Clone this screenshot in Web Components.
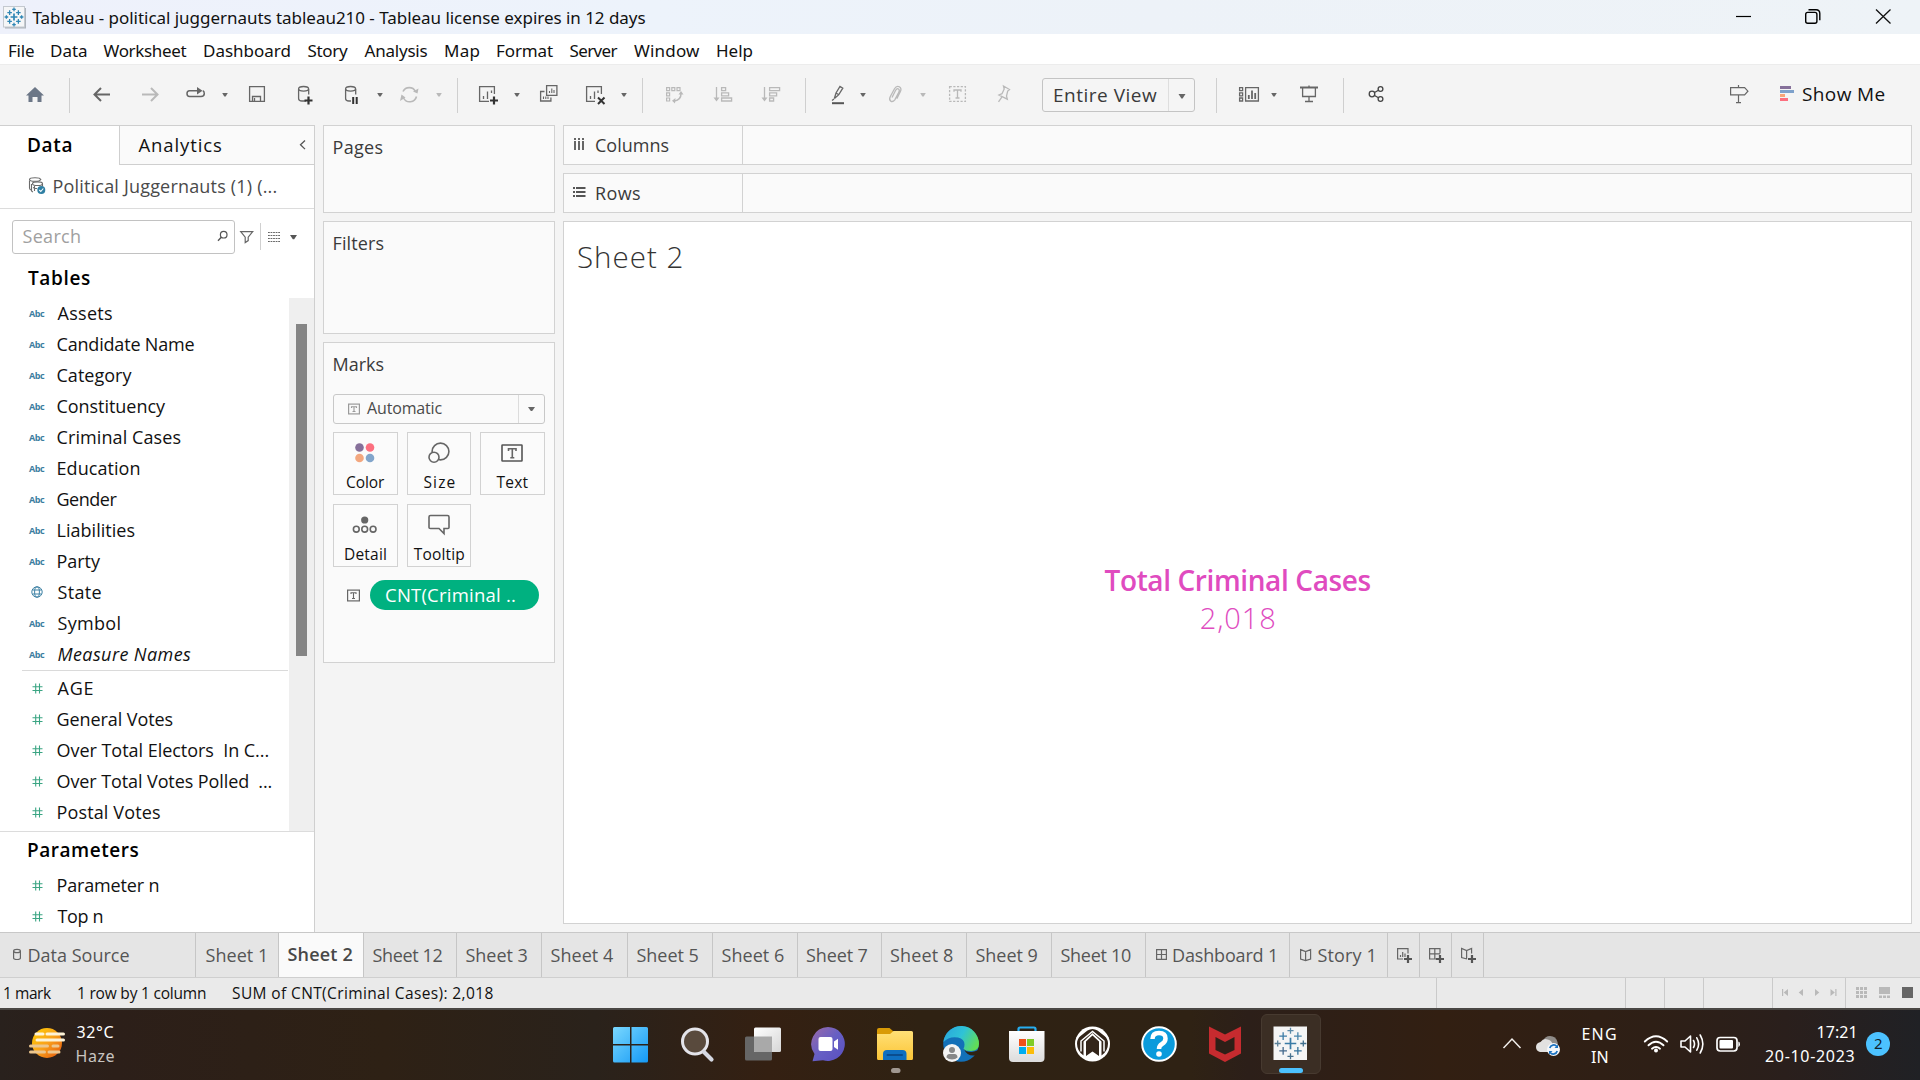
<!DOCTYPE html>
<html lang="en">
<head>
<meta charset="utf-8">
<title>Tableau - political juggernauts tableau210</title>
<style>
html,body{margin:0;padding:0}
body{width:1920px;height:1080px;overflow:hidden;background:#f4f4f4;font-family:"Open Sans","Liberation Sans",sans-serif;font-size:18px;color:#111}
</style>
</head>
<body>
<tableau-desktop></tableau-desktop>
<script>
const ctx = document.createElement('canvas').getContext('2d');

// Text run set to an exact ink width (w) and baseline (b, from the container's top).
customElements.define('t-x', class extends HTMLElement {
  connectedCallback() {
    if (!this.shadowRoot) {
      this.attachShadow({mode: 'open'}).innerHTML =
        '<style>:host{display:block;flex:none;height:24px;line-height:24px;white-space:pre}</style><slot></slot>';
    }
    const cs = getComputedStyle(this), txt = this.textContent;
    ctx.font = `${cs.fontStyle} ${cs.fontWeight} ${cs.fontSize} ${cs.fontFamily}`;
    const m = ctx.measureText(txt);
    const ink = m.actualBoundingBoxLeft + m.actualBoundingBoxRight;
    const w = +this.getAttribute('w') || ink;
    this.style.width = w + 'px';
    if (txt.length > 1) this.style.letterSpacing = ((w - ink) / (txt.length - 1)).toFixed(3) + 'px';
    this.style.textIndent = m.actualBoundingBoxLeft.toFixed(2) + 'px';
    if (this.hasAttribute('b')) {
      const A = Math.round(m.fontBoundingBoxAscent), D = Math.round(m.fontBoundingBoxDescent);
      this.style.marginTop = Math.round(+this.getAttribute('b') - ((24 - A - D) / 2 + A)) + 'px';
    }
  }
});

const T = (w, b, text, css = '') => `<t-x w="${w}" b="${b}" style="${css}">${text}</t-x>`;
const S = (x, y, w, h, s) => `<svg width="${w}" height="${h}" viewBox="${x} ${y} ${w} ${h}" fill="none">${s}</svg>`;
// Lays items out left to right; each is [x, width, html].
const flow = (items, from = 0) => {
  let c = from;
  return items.map(([x, w, html]) => {
    const m = x - c; c = x + w;
    return `<div class="it" style="margin-left:${m.toFixed(2)}px;width:${w}px">${html}</div>`;
  }).join('');
};
const BASE = `<style>*{box-sizing:border-box}:host{display:flex;flex:none;box-sizing:border-box}svg{display:block;flex:none}.it{display:flex;flex:none;height:100%;align-items:flex-start}</style>`;
const def = (name, css, html) => customElements.define(name, class extends HTMLElement {
  connectedCallback() {
    if (this.shadowRoot) return;
    this.attachShadow({mode: 'open'}).innerHTML = BASE + `<style>${css}</style>` + (typeof html === 'function' ? html(this) : html);
  }
});

const plus = (x, y, r, w, c) => `<path d="M${x - r} ${y}h${2 * r}M${x} ${y - r}v${2 * r}" stroke="${c}" stroke-width="${w}"/>`;
const tabMark = (cx, cy, k) => [[0,0,3.6],[-4.6,-4.6,2.4],[4.6,-4.6,2.4],[-4.6,4.6,2.4],[4.6,4.6,2.4],[0,-8,1.9],[0,8,1.9],[-8,0,1.9],[8,0,1.9]]
  .map(([x, y, r], i) => plus(cx + x * k, cy + y * k, r * k, i ? 1.3 : 1.7, ['#3b7ba6','#3b7ba6','#4a86ab','#44698c','#34729b','#5a8aa8','#47718f','#5b8199','#40708f'][i])).join('');

/* ---------- window title ---------- */
def('win-title', ':host{height:34px;background:linear-gradient(90deg,#eef1fb,#edf3fb 34%,#edf2f8 60%,#eef3f7)}', () => flow([
  [3, 23, S(3, 0, 23, 34, `<rect x="5" y="8" width="21" height="20.5" fill="#aeb4bc"/><rect x="3.5" y="6.5" width="21" height="20.5" fill="#f5f6f7" stroke="#c4c9cf"/>${tabMark(14, 17, .95).replace(/#\w{6}/g, '#2f86b5')}`)],
  [32.5, 613, T(613, 24, 'Tableau - political juggernauts tableau210 - Tableau license expires in 12 days', 'font:400 17px/24px Noto Sans;color:#111')],
  [1734, 20, S(1734, 0, 20, 34, '<path d="M1736 16.5h15" stroke="#000" stroke-width="1.2"/>')],
  [1803, 20, S(1803, 0, 20, 34, '<rect x="1805.7" y="12.4" width="11.2" height="10.8" rx="2" stroke="#000" stroke-width="1.4"/><path d="M1808.5 9.7h7.5q3.8 0 3.8 3.8v6.8" stroke="#000" stroke-width="1.4"/>')],
  [1873, 20, S(1873, 0, 20, 34, '<path d="M1876 9.5l14.5 14M1890.500 9.500l-14.500 14" stroke="#111" stroke-width="1.3"/>')]
]));

/* ---------- menu ---------- */
def('menu-bar', ':host{height:30px;background:#fff}', () => flow(
  [[9,25,'File'],[51,36,'Data'],[103.5,83,'Worksheet'],[204,86.500,'Dashboard'],[307.5,40.5,'Story'],[364.5,63,'Analysis'],[445,34.500,'Map'],[497,56,'Format'],[569.500,48,'Server'],[634,66,'Window'],[717,35.5,'Help']]
    .map(([x, w, t]) => [x, w, T(w, 23, t, 'font:400 17px/24px Noto Sans;color:#111')])));

/* ---------- toolbar ---------- */
const G = '#666', L = '#b9b9b9', K = '#333';
const sepT = x => [x, 1, `<svg width="1" height="61" viewBox="0 64 1 61"><rect y="78" width="1" height="35" fill="#cfcfcf"/></svg>`];
const caret = (x, c = G) => [x - 4, 8, S(x - 4, 64, 8, 61, `<path d="M${x - 2.8} 93h5.600l-2.100 3.500h-1.400z" fill="${c}"/>`)];
const tool = (x, w, s, c = G) => [x, w, S(x, 64, w, 61, `<g stroke="${c}" stroke-width="1.300">${s}</g>`)];
def('tool-bar', `:host{height:61px;background:#f4f4f4;border-top:1px solid #ececec}:host>div svg,.it>svg{margin-top:-1px}
.sel{width:153px;height:34px;margin-top:13px;border:1px solid #c4c4c4;border-radius:3px;display:flex;background:#f5f5f5}
.sel .a{width:126px;border-right:1px solid #dedede;padding-left:11px;display:flex}.sel .c{width:25px;padding:15px 0 0 9px}`, () => flow([
  tool(24, 22, '<path d="M35 87l9 8.500h-2.500v6.500h-4v-5h-5v5h-4v-6.500h-2.500z" fill="#6c7787" stroke="none"/>'),
  sepT(69),
  tool(92, 20, '<path d="M110 94.500H95M101 88l-6.500 6.500 6.500 6.500" stroke-width="2"/>'),
  tool(140, 20, '<path d="M142 94.500h15M151 88l6.500 6.500-6.500 6.500" stroke-width="2"/>', L),
  tool(184, 23, '<path d="M191 90.700h-1.500q-2.500 0-2.500 2.800 0 3 2.500 3h11.500q3.300 0 3.300-3 0-2.300-1.500-2.800M191 90.700h7" stroke-width="1.500"/><path d="M197 87l5.500 3.700-5.500 3.800z" fill="#666" stroke="none"/>'),
  caret(225),
  tool(247, 20, '<path d="M249.600 86.600h14.800v14.800h-14.800zM252.500 101v-4.500h8v4.500M254.500 98v3"/>'),
  tool(296, 19, '<path d="M306 101h-4q-3.400 0-3.400-2.500v-9.500M308.700 89v5.500"/><ellipse cx="303.600" cy="88.800" rx="5" ry="2.300"/><path d="M304.500 100.500h8M308.500 96.500v8" stroke="#333" stroke-width="2.200"/>'),
  tool(343, 19, '<path d="M351 101h-2q-3.400 0-3.400-2.500v-9.500M355.700 89v5.500"/><ellipse cx="350.600" cy="88.800" rx="5" ry="2.300"/><path d="M353.200 97v7M356.700 97v7" stroke="#333" stroke-width="2"/>'),
  caret(380),
  tool(399, 21, '<path d="M403 91.500a7 7 0 0 1 12.500 0M416.500 96.500a7 7 0 0 1-13 1.500" stroke-width="1.600"/><path d="M413 91.500l4.500 2 1-5zM400 101l1.500-6.500 4 3z" fill="#b9b9b9" stroke="none"/>', L),
  caret(439, L),
  sepT(457),
  tool(477, 23, '<path d="M489 101.400h-9.400v-14.800h14.800v7.500M483.500 99v-3M487.500 99v-7.500M491.500 93v-2.500"/><path d="M490 100.500h8M494 96.500v8" stroke="#333" stroke-width="2.200"/>'),
  caret(517),
  tool(538, 21, '<path d="M546.600 85.600h10.300v9.800h-10.300zM544.500 91.500h-3.900v9.500h10.300v-3.500"/><path d="M549.500 93v-2M551.800 93v-4.500M554 93v-3M543.500 99v-2.500M545.800 99v-2.500M548 99v-2.500" stroke-width="1.100"/>'),
  tool(584, 23, '<path d="M595 101.400h-8.400v-14.800h14.800v7.500M590.500 99v-3M594.500 99v-7.500M598 93v-2.500"/><path d="M598 97.500l6.500 6.500M604.500 97.500l-6.500 6.500" stroke="#333" stroke-width="2"/>'),
  caret(624),
  sepT(642),
  tool(664, 21, '<path d="M666.600 87.600h3v3h-3zM671.800 87.600h3v3h-3zM677 87.600h3v3h-3zM666.600 92.800h3v3h-3zM666.600 98h3v3h-3z" stroke-width="1.200"/><path d="M681 93.500q0 6.500-6.500 7.500" stroke-width="1.500"/><path d="M678.500 94.500l2.500-3.500 2.500 3.500zM675.500 98l-3.500 2.800 3 2.700z" fill="#b9b9b9" stroke="none"/>', L),
  tool(712, 22, '<path d="M716.500 87v12"/><path d="M713.500 97.500h6l-3 4z" fill="#b9b9b9" stroke="none"/><path d="M721.600 87.600h4v3h-4zM721.600 92.800h7v3h-7zM721.600 98h10v3h-10z"/>', L),
  tool(760, 22, '<path d="M764.500 87v12"/><path d="M761.500 97.500h6l-3 4z" fill="#b9b9b9" stroke="none"/><path d="M769.600 87.600h10v3h-10zM769.600 92.800h7v3h-7zM769.600 98h4v3h-4z"/>', L),
  sepT(805),
  tool(830, 17, '<path d="M834.500 98l1.500-5 4-6.500 2.800 1.700-4 6.500-4 3.500zM836 93l2.800 1.700M832 100.500l2-1.500"/><path d="M832 103.200h12" stroke="#555" stroke-width="2"/>'),
  caret(863),
  tool(887, 17, '<path d="M892 97.500l3.500-7q1.500-2.500 3-1.500t.3 3.300l-4 7.500q-2 2.500-4 1.300-2-1.400-.6-4.300l4.300-8q2-3.500 4.800-2 2.700 1.700 1 5l-3.500 6.800"/>', L),
  caret(923, L),
  tool(948, 20, '<rect x="949.600" y="86.600" width="15.800" height="14.800" stroke-dasharray="2.200 1.500"/><path d="M954 91.800v-1.800h7v1.800M957.500 90v8M955.500 98h4"/>', L),
  tool(995, 18, '<path d="M1003.500 86l6 3.500-1.800 1.500-1.200 5 .8 3.200-8.300-4.200 3-1.300 2.200-4.700zM1002 96.800l-3.500 5"/>', L),
  [1042, 153, `<div class="sel"><div class="a">${T(103, 23, 'Entire View', 'font-size:19px;font-weight:400;color:#3a3a3a')}</div><div class="c">${S(0, 0, 8, 5, '<path d="M.5 0h7L4.600 4.500h-1.200z" fill="#666"/>').replace('<svg', '<svg style="margin:0"')}</div></div>`],
  sepT(1216),
  tool(1237, 24, '<path d="M1239.600 87.600h3v3h-3zM1239.600 92.800h3v3h-3zM1239.600 98h3v3h-3zM1245.600 87.600h12.800v13.400h-12.800z"/><path d="M1248.800 99v-4M1252 99v-8.500M1255.200 99v-6" stroke-width="1.800"/>'),
  caret(1274),
  tool(1298, 22, '<path d="M1300 87.500h18" stroke-width="2"/><path d="M1302.600 88v8.500h12.800v-8.500M1309 85.500v2M1309 96.500v5M1305 101.500h8"/>'),
  sepT(1343),
  tool(1367, 19, '<circle cx="1372" cy="94" r="2.800"/><circle cx="1380.500" cy="89" r="2.400"/><circle cx="1380.500" cy="99" r="2.400"/><path d="M1374.500 92.500l4-2.300M1374.500 95.500l4 2.300"/>', '#444'),
  tool(1727, 24, '<path d="M1730.600 87.600h14l3.300 3.600-3.300 3.600h-14zM1738.500 85v2.500M1738.500 95v7.500M1736 102.600h5" stroke-width="1.200"/>'),
  [1779, 17, S(1779, 64, 17, 61, '<path d="M1780 86h11v3h-11z" fill="#86709a"/><path d="M1780 90h14v3h-14z" fill="#7ea1cb"/><path d="M1780 94h5v3h-5z" fill="#f7a579"/><path d="M1780 98h8v3h-8z" fill="#fc6f7f"/>')],
  [1802, 83, T(82.5, 36, 'Show Me', 'font-size:19px')]
]));

/* ---------- data pane ---------- */
const globe = S(0, 0, 12, 12, '<g stroke="#3f82a5" stroke-width="1"><circle cx="6" cy="6" r="5.200"/><ellipse cx="6" cy="6" rx="2.400" ry="5.200"/><path d="M1.500 4h9M1.500 8h9"/></g>');
const hash = S(0, 0, 11, 11, '<path d="M.5 3.700h10M.5 7.500h10M3.700.5v10M7.500.5v10" stroke="#3ba583" stroke-width="1.100"/>');
def('field-row', `:host{height:31px;width:100%}.k{width:28.5px;margin-left:29px;display:flex;flex:none}`, el => {
  const k = el.getAttribute('kind');
  const icon = k === 'abc' ? T(16, 19, 'Abc', 'font:700 9px/24px Open Sans;color:#3c7e9f')
    : k === 'geo' ? `<span style="padding:9px 0 0 2px">${globe}</span>` : `<span style="padding:10px 0 0 3px">${hash}</span>`;
  return `<div class="k">${icon}</div>` + T(el.getAttribute('w'), 22, el.getAttribute('label'),
    el.hasAttribute('em') ? 'font-style:italic' : '');
});
const field = (kind, w, label, em = '') => `<field-row kind="${kind}" w="${w}" label="${label}" ${em}></field-row>`;

def('data-pane', `:host{width:315px;height:807px;background:#fff;border-right:1px solid #cfcfcf;border-top:1px solid #cfcfcf;flex-direction:column;overflow:hidden}
.tabs{height:39px;display:flex;flex:none}.d{width:119px;padding-left:28px;display:flex}.an{flex:1;background:#fafafa;border-left:1px solid #cfcfcf;border-bottom:1px solid #cfcfcf;display:flex}
.ds{height:44px;border-bottom:1px solid #dcdcdc;display:flex;flex:none}.se{height:46px;display:flex;flex:none;padding:11px 0 0 12px}
.box{width:223px;height:34px;border:1px solid #c2c2c2;border-radius:3px;display:flex;flex:none}
.th{height:43px;display:flex;flex:none;padding-left:28px}.body{height:533px;display:flex;flex:none}
.list{width:289px;flex:none;display:flex;flex-direction:column}.hr{height:1px;margin:0 1px 2px 22px;background:#dadada;flex:none}
.sb{width:25px;background:#efefef;padding:26px 0 0 7px}.th2{width:11px;height:332px;background:#858585}
.par{border-top:1px solid #dcdcdc;display:flex;flex-direction:column;flex:none;height:101px}`, () => `
<div class="tabs"><div class="d">${T(43.5, 26, 'Data', 'font-size:19px;font-weight:600;color:#000')}</div><div class="an">${flow([
  [138.5, 83, T(82.5, 26, 'Analytics', 'font-size:18.5px')],
  [298, 10, S(298, 126, 10, 38, '<path d="M305 140.500l-4.500 4.300 4.500 4.300" stroke="#555" stroke-width="1.300"/>')]], 120)}</div></div>
<div class="ds">${flow([
  [28, 18, S(28, 165, 18, 43, '<g stroke="#6a6a6a" stroke-width="1.100"><path d="M31 190q-1.500-.5-1.500-2v-7.500M41 179.500v-.5"/><ellipse cx="35" cy="179.500" rx="5.500" ry="1.800"/><path d="M33 192q-1.500-.5-1.500-1.500v-6.500M42.500 184v2.500"/><ellipse cx="37.500" cy="183.700" rx="5" ry="1.800"/><path d="M33 187.500q1.500 1 4 1M34.500 186v5"/></g><circle cx="41.300" cy="190" r="4" fill="#2f7fa3"/><path d="M39.300 190l1.500 1.500 2.500-3" stroke="#fff" stroke-width="1.100"/>')],
  [53.5, 223, T(223, 28, 'Political Juggernauts (1) (...', 'color:#4a4a4a')]])}</div>
<div class="se"><div class="box">${flow([
  [22.5, 58, T(57.5, 22, 'Search', 'color:#a0a0a0')],
  [217, 12, S(217, 221, 12, 32, '<circle cx="223.700" cy="234.700" r="3.300" stroke="#555" stroke-width="1.200"/><path d="M221.300 237.200l-3.300 3.500" stroke="#555" stroke-width="1.400"/>')]], 13)}</div>${flow([
  [239, 16, S(239, 220, 16, 34, '<path d="M240.700 231.600h12l-4.500 5.500v3.500l-3 2v-5.500z" stroke="#666" stroke-width="1.200"/>')],
  [260, 1, S(260, 220, 1, 34, '<path d="M260 223h1v27h-1z" fill="#d0d0d0"/>')],
  [267, 15, S(267, 220, 15, 34, '<path d="M268 232.500h12M268 235.500h12M268 238.500h12M268 241.500h12" stroke="#666" stroke-width="1.200" stroke-dasharray="1.800 .75"/>')],
  [289, 9, S(289, 220, 9, 34, '<path d="M290 235h7l-2.800 4.300h-1.400z" fill="#555"/>')]], 235)}</div>
<div class="th">${T(62, 30, 'Tables', 'font-size:19px;font-weight:600;color:#000')}</div>
<div class="body"><div class="list">
${field('abc',54.5,'Assets')}${field('abc',137,'Candidate Name')}${field('abc',75,'Category')}${field('abc',108.5,'Constituency')}${field('abc',123,'Criminal Cases')}${field('abc',82,'Education')}${field('abc',60,'Gender')}${field('abc',77,'Liabilities')}${field('abc',43.5,'Party')}${field('geo',44,'State')}${field('abc',62,'Symbol')}${field('abc',133.5,'Measure Names','em')}
<div class="hr"></div>
${field('num',35,'AGE')}${field('num',115,'General Votes')}${field('num',211,'Over Total Electors  In C...')}${field('num',214,'Over Total Votes Polled  ...')}${field('num',102.5,'Postal Votes')}
</div><div class="sb"><div class="th2"></div></div></div>
<div class="par"><div style="display:flex;height:38px;padding-left:28px;flex:none">${T(110.5, 25, 'Parameters', 'font-size:19px;font-weight:600;color:#000')}</div>${field('num',101,'Parameter n')}${field('num',45,'Top n')}</div>`);

/* ---------- cards ---------- */
def('shelf-card', `:host{width:232px;background:#fafafa;border:1px solid #d2d2d2;flex-direction:column;padding:0 9px 0 9px}.h{display:flex;height:51px;flex:none;padding-left:.5px}`,
  el => `<div class="h">${T(el.getAttribute('w'), 28, el.getAttribute('label'), 'color:#3a3a3a')}</div><slot></slot>`);
def('mark-button', `:host{height:63px;border:1px solid #d2d2d2;background:#fbfbfb;flex-direction:column;align-items:center}.i{height:38px;align-self:flex-start;padding-left:16px}.l{display:flex;height:23px}`,
  el => `<div class="i"><slot></slot></div><div class="l">${T(el.getAttribute('w'), 17, el.getAttribute('label'), 'font-size:15.5px')}</div>`);
const tIcon = (x, y, w, h, c) => `<rect x="${x + .6}" y="${y + .6}" width="${w - 1.2}" height="${h - 1.2}" stroke="${c}" stroke-width="1.200"/><path d="M${x + w / 2 - 2.5} ${y + 4.5}v-1.300h5v1.300M${x + w / 2} ${y + 3.2}v${h - 6.200}M${x + w / 2 - 1.5} ${y + h - 3}h3" stroke="${c}" stroke-width="1.100"/>`;
def('mark-controls', `:host{flex-direction:column}
.dd{height:30px;border:1px solid #c8c8c8;border-radius:3px;display:flex;flex:none;margin-bottom:8px}.l{width:185px;border-right:1px solid #dcdcdc;display:flex}
.g{display:grid;grid-template-columns:65px 64px 65px;gap:9px;flex:none}.pr{display:flex;height:30px;margin-top:13px;flex:none}
.pill{width:169px;height:30px;border-radius:15px;background:#00b180;padding-left:16px;display:flex}`, () => `
<div class="dd"><div class="l">${flow([
  [14, 13, S(0, 0, 13, 28, tIcon(0, 8.500, 12, 11, '#9a9a9a'))],
  [33, 76, T(75.5, 19, 'Automatic', 'font-size:16px;color:#4a4a4a')]])}</div>${S(0, 0, 24, 28, '<path d="M9 12h7l-2.800 4h-1.400z" fill="#666"/>')}</div>
<div class="g">
<mark-button label="Color" w="39">${S(0, 0, 30, 38, '<circle cx="9.500" cy="14.500" r="4.300" fill="#86709a"/><circle cx="20" cy="14.500" r="4.300" fill="#fc6f7f"/><circle cx="9.500" cy="25" r="4.300" fill="#f3a77f"/><circle cx="20" cy="25" r="4.300" fill="#82a5cb"/>')}</mark-button>
<mark-button label="Size" w="31">${S(0, 0, 30, 38, '<circle cx="16.500" cy="18.500" r="8.400" stroke="#666" stroke-width="1.600"/><circle cx="10" cy="24.200" r="5" fill="#fbfbfb" stroke="#666" stroke-width="1.600"/>')}</mark-button>
<mark-button label="Text" w="32">${S(0, 0, 30, 38, '<rect x="5" y="12" width="20" height="16" rx=".5" stroke="#555" stroke-width="1.600"/><path d="M11.500 18v-2.200h7.500v2.200M15.300 15.800v9M13.300 24.800h4" stroke="#666" stroke-width="1.600"/>')}</mark-button>
<mark-button label="Detail" w="41">${S(0, 0, 30, 38, '<circle cx="14.700" cy="15" r="3.600" fill="#666"/><g stroke="#666" stroke-width="1.600"><circle cx="6.300" cy="24.200" r="2.900"/><circle cx="14.700" cy="24.200" r="2.900"/><circle cx="23.100" cy="24.200" r="2.900"/></g>')}</mark-button>
<mark-button label="Tooltip" w="50.5">${S(0, 0, 30, 38, '<path d="M6.500 10.500h17q1.500 0 1.500 1.500v10.500q0 1-1 1h-4v5l-5-5h-8.500q-1.500 0-1.500-1v-10.500q0-1.500 1.500-1.500z" stroke="#666" stroke-width="1.600"/>')}</mark-button>
</div>
<div class="pr">${flow([[14, 13, S(0, 0, 13, 30, tIcon(0, 9.500, 13, 12, '#666'))]])}<div style="width:10px"></div><div class="pill">${T(129, 22, 'CNT(Criminal ..', 'font-size:18.5px;color:#fff')}</div></div>`);
def('card-column', ':host{flex-direction:column;gap:8px;margin-left:8px;width:232px}', `
<shelf-card label="Pages" w="49" style="height:88px"></shelf-card>
<shelf-card label="Filters" w="50" style="height:113px"></shelf-card>
<shelf-card label="Marks" w="50" style="height:321px"><mark-controls></mark-controls></shelf-card>`);

/* ---------- worksheet ---------- */
def('shelf-row', `:host{height:40px;background:#fafafa;border:1px solid #d2d2d2}.l{width:179px;border-right:1px solid #d2d2d2;display:flex}`,
  el => `<div class="l"><div style="width:32px"><slot></slot></div>${T(el.getAttribute('w'), 26, el.getAttribute('label'), 'color:#3a3a3a')}</div>`);
def('work-sheet', `:host{flex-direction:column;width:1349px;margin-left:8px;gap:8px}
.v{height:703px;background:#fff;border:1px solid #d2d2d2;display:flex;flex-direction:column;flex:none}.h{height:338px;padding-left:14px;display:flex;flex:none}
.c{display:flex;flex-direction:column;align-items:center;flex:none}.c div{display:flex;height:38px}`, () => `
<shelf-row label="Columns" w="72.5">${S(0, 0, 32, 38, '<path d="M11 12v2M15 12v2M19 12v2M11 15v9M15 15v9M19 15v9" stroke="#666" stroke-width="2"/>')}</shelf-row>
<shelf-row label="Rows" w="44">${S(0, 0, 32, 38, '<path d="M9 14h2M9 18h2M9 22h2M12 14h9.500M12 18h9.500M12 22h9.500" stroke="#555" stroke-width="2"/>')}</shelf-row>
<div class="v"><div class="h">${T(103.5, 46, 'Sheet 2', 'font-size:29.5px;font-weight:300;color:#333')}</div>
<div class="c"><div>${T(266, 31, 'Total Criminal Cases', 'font-size:28px;font-weight:600;color:#e04bbf')}</div><div>${T(73.5, 31, '2,018', 'font-size:29px;font-weight:300;color:#e04bbf')}</div></div></div>`);

/* ---------- sheet tabs ---------- */
def('sheet-tabs', `:host{height:46px;background:#e5e5e5;border-top:1px solid #c8c8c8;border-bottom:1px solid #cfcfcf}.t{height:44px;display:flex;flex:none;border-right:1px solid #c6c6c6}.on{background:#fafafa}`, () => {
  const P = '#666', g = (x, w, s) => [x, w, S(x, 933, w, 44, `<g stroke="${P}" stroke-width="1.200">${s}</g>`)];
  const tx = (x, w, t, bold) => [x, w, T(w, bold ? 28 : 29, t, bold ? 'font-size:18px;font-weight:600;color:#484848' : 'font-size:18px;color:#555')];
  const tabs = [
    [196, [g(12, 11, '<path d="M13.600 951v7q0 1.500 3.400 1.500t3.400-1.500v-7"/><ellipse cx="17" cy="951" rx="3.400" ry="1.700"/>'), tx(28.5, 101, 'Data Source')]],
    [279, [tx(205.5, 59.5, 'Sheet 1')]], [364, [tx(287.5, 65, 'Sheet 2', 1)]], [457, [tx(372.5, 70, 'Sheet 12')]],
    [542, [tx(465.5, 62, 'Sheet 3')]], [628, [tx(550.5, 62.5, 'Sheet 4')]], [713, [tx(636.5, 62, 'Sheet 5')]], [798, [tx(721.5, 62.5, 'Sheet 6')]],
    [882, [tx(806, 61.5, 'Sheet 7')]], [967, [tx(890, 63, 'Sheet 8')]], [1052, [tx(975.5, 62, 'Sheet 9')]], [1146, [tx(1060.5, 70.5, 'Sheet 10')]],
    [1290, [g(1155, 13, '<path d="M1156.600 949.600h9.800v9.800h-9.800zM1161.500 949.600v9.800M1156.600 954.500h9.800"/>'), tx(1173, 102, 'Dashboard 1')]],
    [1388, [g(1299, 14, '<path d="M1300.600 949.600l5 2 5-2v9.500l-5 1.500-5-1.500zM1305.600 951.600v8.500"/>'), tx(1317.5, 56, 'Story 1')]],
    [1420, [g(1396, 18, '<path d="M1403 959h-5.400v-10.400h10.400v5M1400.500 957v-2M1402.700 957v-5M1405 957v-3.500"/>' + plus(1408, 959, 4, 2.2, '#555'))]],
    [1452, [g(1428, 18, '<path d="M1436 959h-6.400v-10.400h10.400v5M1434.800 948.600v10M1429.600 953.800h10.400"/>' + plus(1440, 959, 4, 2.2, '#555'))]],
    [1484, [g(1460, 18, '<path d="M1467 959l-5.400-1.500v-9l5 2 5-2v5M1466.600 950.500v8"/>' + plus(1472, 959, 4, 2.2, '#555'))]]
  ];
  let p = 0;
  return tabs.map(([e, items], i) => { const s = p; p = e; return `<div class="t ${i == 2 ? 'on' : ''}" style="width:${e - s}px">${flow(items, s)}</div>`; }).join('');
});

/* ---------- status bar ---------- */
def('status-bar', ':host{height:30px;background:#eaeaea}', () => {
  const f = 'font-size:15.5px', s = x => [x, 1, S(x, 0, 1, 30, `<path d="M${x} 0h1v30h-1z" fill="#cacaca"/>`)];
  const g = (x, w, h, c = '#b9b9b9') => [x, w, S(x, 978, w, 30, `<path d="${h}" fill="${c}"/>`)];
  let grid = ''; for (const y of [987, 991, 995]) for (const x of [1856, 1860, 1864]) grid += `M${x} ${y}h3v3h-3z`;
  return flow([[4, 48, T(48, 21, '1 mark', f)], [78, 128, T(128, 21, '1 row by 1 column', f)], [232, 262, T(261.5, 21, 'SUM of CNT(Criminal Cases): 2,018', f)],
    s(1436), s(1625), s(1664), s(1703), s(1772),
    g(1781, 8, 'M1782 989h1.200v7h-1.200zM1788 989v7l-4.300-3.500z'), g(1798, 6, 'M1803 989v7l-4.300-3.500z'), g(1814, 6, 'M1815 989v7l4.300-3.500z'), g(1829, 8, 'M1835.300 989h1.200v7h-1.200zM1830.500 989v7l4.300-3.500z'),
    s(1845), g(1855, 13, grid), g(1878, 13, 'M1879 987h11v7h-11zM1879 995.500h3v2.500h-3zM1883 995.500h3v2.500h-3zM1887 995.500h3v2.500h-3z'), g(1901, 13, 'M1902 987h11v11h-11z', '#666')]);
});

/* ---------- taskbar ---------- */
def('task-bar', `:host{height:72px;border-top:2px solid #4a4744;color:#fff;background:linear-gradient(90deg,#29211d 0,#2c1f19 6%,#2e2115 20%,#2a221b 31%,#342012 40%,#2f2213 48%,#2f2214 62%,#2c1f19 65%,#321f12 75%,#2e1f16 86%,#2a1f1c 93%,#202125 100%)}
.col{display:flex;flex-direction:column}.col div{display:flex;height:24px;flex:none}.act{width:60px;height:60px;margin-top:4px;border-radius:6px;background:#3b2e24;border:1px solid #473a30;display:flex}.badge{width:24px;height:24px;margin-top:22px;border-radius:50%;background:#4cc2ff;display:flex;justify-content:center}`, () => {
  const W = 'font:400 16px/24px Noto Sans;color:#fff';
  const g = (x, w, s) => [x, w, S(x, 1010, w, 70, s)];
  return flow([
    g(28, 39, '<defs><linearGradient id="sun" x1="0" y1="0" x2="1" y2="1"><stop stop-color="#ffcf00"/><stop offset=".5" stop-color="#f9a21c"/><stop offset="1" stop-color="#e2520b"/></linearGradient></defs><circle cx="47" cy="1043" r="15" fill="url(#sun)"/><path d="M36 1034h7" stroke="#fdf3d8" stroke-width="3" stroke-linecap="round"/><path d="M47 1034h16.500M37 1040h26.500" stroke="#fdf3d8" stroke-width="3" stroke-linecap="round"/><path d="M30.500 1046h17M53 1046h5M30.500 1052h14M49 1052h10" stroke="#ecc68e" stroke-width="3" stroke-linecap="round"/>'),
    [76.5, 40, `<div class="col"><div>${T(37, 28, '32°C', W)}</div><div>${T(38, 28, 'Haze', 'font:400 16px/24px Noto Sans;color:#c8c4c1')}</div></div>`],
    g(612, 38, '<defs><linearGradient id="win" x1="0" y1="0" x2="1" y2="1"><stop stop-color="#7ad8ff"/><stop offset="1" stop-color="#1499f5"/></linearGradient></defs><path d="M613 1028.500q0-1.500 1.500-1.500h15.500v17h-17zM631.500 1027h15q1.500 0 1.500 1.500v15.500h-16.500zM613 1045.500h17v17h-15.500q-1.500 0-1.500-1.500zM631.500 1045.500h16.500v15.500q0 1.500-1.500 1.500h-15z" fill="url(#win)"/>'),
    g(680, 35, '<circle cx="695" cy="1041.500" r="12.500" fill="#594a3d" stroke="#e4e4ea" stroke-width="3"/><path d="M704 1052l7.500 7.500" stroke="#d5d8e2" stroke-width="4.200" stroke-linecap="round"/>'),
    g(744, 38, '<rect x="745" y="1036.500" width="27" height="24" rx="1.500" fill="#666"/><defs><linearGradient id="tv" x1="0" y1="0" x2="1" y2="1"><stop stop-color="#fff"/><stop offset="1" stop-color="#d6d6d6"/></linearGradient></defs><rect x="754" y="1027.500" width="27" height="24.500" rx="1.500" fill="url(#tv)"/><path d="M754 1036.500h18v15.500h-16.500q-1.500 0-1.500-1.500z" fill="#a9a9a9"/>'),
    g(810, 37, '<defs><linearGradient id="ch" x1="0" y1="0" x2="1" y2="1"><stop stop-color="#9b6aa8"/><stop offset=".5" stop-color="#665fc4"/><stop offset="1" stop-color="#5a4fc0"/></linearGradient></defs><path d="M828 1027a17 17 0 1 1-5 33.300l-10.500 1 2-7.300A17 17 0 0 1 828 1027z" fill="url(#ch)"/><rect x="818.500" y="1037" width="14" height="14" rx="2" fill="#fff"/><path d="M834 1041.500l4-2.800v11l-4-2.800z" fill="#fff"/>'),
    g(875, 40, '<defs><linearGradient id="fo" x1="0" y1="0" x2="0" y2="1"><stop stop-color="#ffe077"/><stop offset="1" stop-color="#fcc536"/></linearGradient></defs><path d="M877 1030q0-2 2-2h10.500l4 3.500v5h-16.500z" fill="#d99a06"/><path d="M877 1034h13l3.500-3h18q1.500 0 1.500 1.500v26q0 1.500-1.500 1.500h-33q-1.500 0-1.500-1.500z" fill="url(#fo)"/><path d="M883 1060v-6q0-4 4-4h15.500q4 0 4 4v6z" fill="#0f6fc0"/><path d="M887.500 1055h14.500" stroke="#0a4d8f" stroke-width="2" stroke-linecap="round"/><rect x="891" y="1068" width="9.500" height="5" rx="2.500" fill="#a19891"/>'),
    g(942, 39, '<defs><linearGradient id="eg" x1="0" y1=".2" x2="1" y2=".6"><stop stop-color="#2aa8dd"/><stop offset=".5" stop-color="#2fc3d6"/><stop offset="1" stop-color="#62dd55"/></linearGradient></defs><circle cx="961" cy="1044" r="17.800" fill="#1370b8"/><path d="M943.500 1042a17.800 17.800 0 0 1 35.500 2q0 7-8 7-7 0-7.500-2.500 1-1.500 1-4 0-5.500-6.500-7-9-1.500-14.500 4.500z" fill="url(#eg)"/><path d="M957 1043q-2 8 5 12 6 3 13 0l3-3 3 5-8 8-15-1q-9-9-1-21z" fill="#114d8d" clip-path="circle(17.800px at 961px 1044px)"/><path d="M964 1049q2 3.500 8 3 4-.5 8-3v3.500l-5 3q-8 1-11-6.500z" fill="#2f2214"/><circle cx="952" cy="1053" r="9" fill="#f4f4f4"/><circle cx="952" cy="1050" r="3" fill="#888"/><path d="M946.500 1057.500q0-3.500 3-3.500h5q3 0 3 3.500-2 2-5.500 2t-5.500-2z" fill="#888"/>'),
    g(1008, 38, '<defs><linearGradient id="st" x1="0" y1="0" x2="0" y2="1"><stop stop-color="#fff"/><stop offset="1" stop-color="#dcdcdc"/></linearGradient></defs><path d="M1018.500 1032v-3q0-1.500 1.500-1.500h14q1.500 0 1.500 1.500v3" stroke="#27aef0" stroke-width="2.200"/><path d="M1009 1031h35.500v27q0 4-4 4h-27.500q-4 0-4-4z" fill="url(#st)"/><path d="M1019 1039h7v7h-7z" fill="#f1511b"/><path d="M1027 1039h7v7h-7z" fill="#80cc28"/><path d="M1019 1047h7v7h-7z" fill="#00adef"/><path d="M1027 1047h7v7h-7z" fill="#fbbc09"/>'),
    g(1074, 38, '<circle cx="1092.500" cy="1044" r="17.500" fill="#fff"/><path d="M1083.500 1055.500q-6.500-4.500-6.500-12 0-4.500 3.500-7.500l7-5.500q5-3 10 0l7 5.500q3.500 3 3.500 7.500 0 7.500-6.500 12v-14l-9-8.500-9 8.500z" fill="#33251a"/><path d="M1081 1051.500v-10.500l11.500-9.500 11.500 9.500v10.500" stroke="#fff" stroke-width="1.500"/><path d="M1086 1056v-14.500l6.500-6 6.500 6v14.500l-6.500-4.500z" fill="#33251a"/>'),
    g(1140, 38, '<circle cx="1159" cy="1044" r="16.800" fill="#0a9bdc" stroke="#fff" stroke-width="2"/><path d="M1152.500 1039q0-6 6.500-6t6.500 5.500q0 3.500-3.500 5.500-3 1.800-3 5" stroke="#fff" stroke-width="4.500"/><circle cx="1159" cy="1054" r="2.800" fill="#fff"/>'),
    g(1208, 34, '<path d="M1209 1026.500l16 8 16-8v27l-16 8.500-16-8.500z" fill="#c62b2f"/><path d="M1215.500 1037l9.500 5 9.500-5v13l-9.500 4.500-9.500-4.500z" fill="#2e1f17"/>'),
    [1261, 60, `<div class="act">${S(1262, 1015, 58, 58, '<path d="M1273.500 1026.500h33.500v33.500h-33.500z" fill="#f5f5f5"/>' + tabMark(1290.500, 1043.500, 1.600) + '<rect x="1279" y="1068" width="24" height="5" rx="2.500" fill="#4cc2ff"/>')}</div>`],
    g(1501, 22, '<path d="M1503.500 1048l8.500-9 8.500 9" stroke="#f2efec" stroke-width="1.500"/>'),
    g(1535, 27, '<path d="M1543 1041q2-5 7-5 6 0 7.500 6l1 6-9 3z" fill="#8f8c89"/><path d="M1540 1052q-4-1-4-5t4.500-5q3-4 7-2.500 4 .5 5 4.500l1 8z" fill="#e2e1e0"/><circle cx="1553.500" cy="1049.500" r="6.500" fill="#f5f8fb"/><path d="M1549.800 1048a4 4 0 0 1 7-1.500M1557.200 1051a4 4 0 0 1-7 1.500" stroke="#1b72c0" stroke-width="1.700"/><path d="M1558 1044.500v3.500h-3.500zM1549 1054.500v-3.500h3.500z" fill="#1b72c0"/>'),
    [1582.5, 34, `<div class="col" style="align-items:center"><div>${T(33.5, 30, 'ENG', W)}</div><div>${T(16.5, 29, 'IN', W)}</div></div>`],
    g(1643, 26, '<g stroke="#fff" stroke-width="1.900" stroke-linecap="round"><path d="M1644.800 1041.500q11.200-10.500 22.400 0M1648.500 1045.300q7.500-7 15 0M1652 1048.700q4-3.500 8 0"/></g><circle cx="1656" cy="1050.500" r="2" fill="#fff"/>'),
    g(1679, 27, '<g stroke="#fff" stroke-width="1.600" stroke-linecap="round" stroke-linejoin="round"><path d="M1681 1041h4l5.500-5v16l-5.500-5h-4zM1693.500 1040.500q2 3.500 0 7M1696.800 1037.800q3.600 6.200 0 12.400M1700.200 1035q5.300 9 0 18"/></g>'),
    g(1715, 27, '<rect x="1717" y="1037.500" width="20" height="13.500" rx="3.200" stroke="#fff" stroke-width="1.700"/><rect x="1719.500" y="1040" width="13.500" height="8.500" rx="1" fill="#fff"/><path d="M1738.300 1041.500q1.700.3 1.700 2.700t-1.700 2.700z" fill="#fff"/>'),
    [1764.5, 90, `<div class="col" style="align-items:flex-end;width:90px"><div>${T(37, 28, '17:21', W)}</div><div>${T(89.5, 28, '20-10-2023', W)}</div></div>`],
    [1866, 24, `<div class="badge">${T(8, 17, '2', 'font:400 15px/24px Noto Sans;color:#10222e')}</div>`]
  ]);
});

def('tableau-desktop', ':host{flex-direction:column;width:1920px;height:1080px;background:#f4f4f4}.m{display:flex;height:807px;flex:none}',
  '<win-title></win-title><menu-bar></menu-bar><tool-bar></tool-bar><div class="m"><data-pane></data-pane><card-column></card-column><work-sheet></work-sheet></div><sheet-tabs></sheet-tabs><status-bar></status-bar><task-bar></task-bar>');
</script>
</body>
</html>
